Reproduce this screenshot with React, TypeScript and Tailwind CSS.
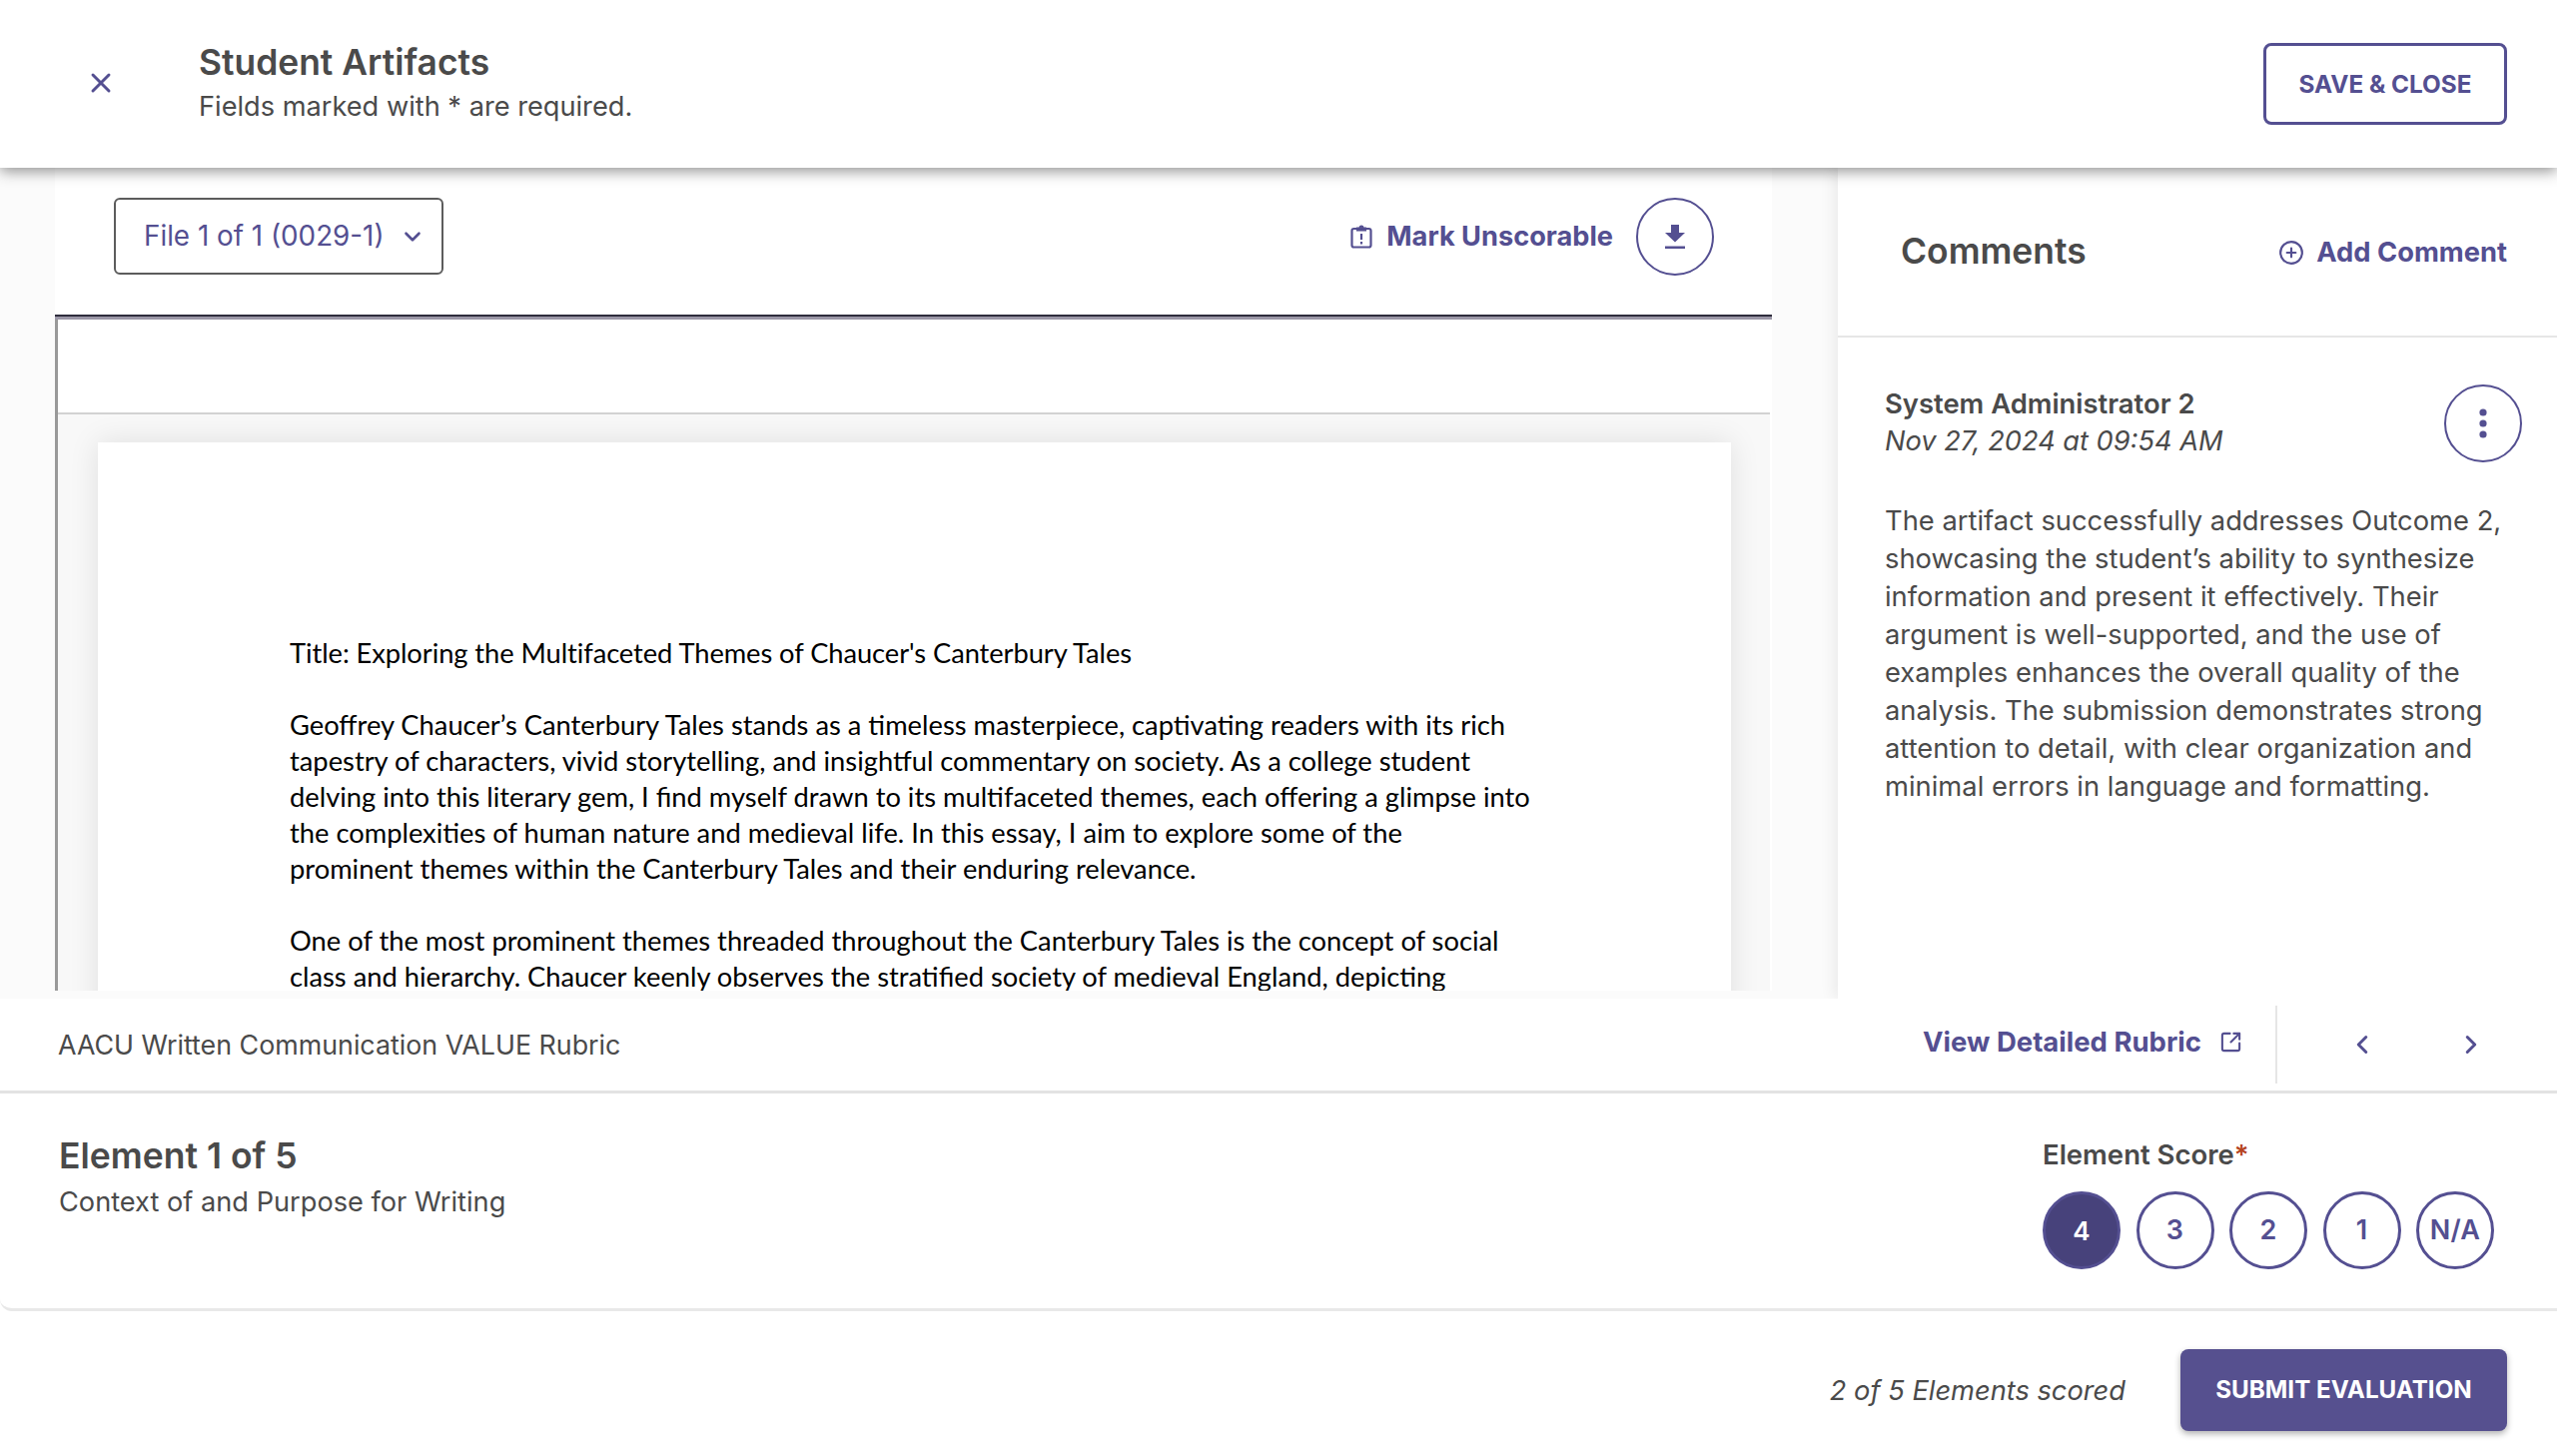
import React from "react";
import { X, ChevronDown, ChevronLeft, ChevronRight, CirclePlus, SquareArrowOutUpRight } from "lucide-react";

const docParas = [
  ["Title: Exploring the Multifaceted Themes of Chaucer's Canterbury Tales"],
  [
    "Geoffrey Chaucer’s Canterbury Tales stands as a timeless masterpiece, captivating readers with its rich",
    "tapestry of characters, vivid storytelling, and insightful commentary on society. As a college student",
    "delving into this literary gem, I find myself drawn to its multifaceted themes, each offering a glimpse into",
    "the complexities of human nature and medieval life. In this essay, I aim to explore some of the",
    "prominent themes within the Canterbury Tales and their enduring relevance.",
  ],
  [
    "One of the most prominent themes threaded throughout the Canterbury Tales is the concept of social",
    "class and hierarchy. Chaucer keenly observes the stratified society of medieval England, depicting",
  ],
];

const commentLines = [
  "The artifact successfully addresses Outcome 2,",
  "showcasing the student’s ability to synthesize",
  "information and present it effectively. Their",
  "argument is well-supported, and the use of",
  "examples enhances the overall quality of the",
  "analysis. The submission demonstrates strong",
  "attention to detail, with clear organization and",
  "minimal errors in language and formatting.",
];

function ClipboardAlert() {
  return (
    <svg width="22" height="24" viewBox="0 0 22 24" fill="none" stroke="#544f91" strokeWidth="2.2">
      <rect x="1.5" y="4" width="19" height="18.5" rx="2" />
      <path d="M7 5.500V3.500h2.500c0-2.500 3-2.500 3 0H15v2z" />
      <path d="M11 9v6M11 17v2.500" />
    </svg>
  );
}

function DownloadGlyph() {
  return (
    <svg width="22" height="26" viewBox="0 0 22 26" fill="#544f91">
      <path d="M7 1h8v8h6L11 18.500 1 9h6z" />
      <rect x="1" y="22.500" width="20" height="2.500" />
    </svg>
  );
}

function Dots() {
  return (
    <svg width="10" height="32" viewBox="0 0 10 32" fill="#544f91">
      <circle cx="5" cy="5" r="3.600" />
      <circle cx="5" cy="16" r="3.600" />
      <circle cx="5" cy="27" r="3.600" />
    </svg>
  );
}

function Score({ label, active }: { label: string; active?: boolean }) {
  return (
    <div
      className={
        active
          ? "flex h-[78px] w-[78px] items-center justify-center rounded-full border-[3px] border-[#544f91] bg-[#47427b] text-[26px] font-semibold text-white"
          : "flex h-[78px] w-[78px] items-center justify-center rounded-full border-[3px] border-[#544f91] bg-white text-[27px] font-semibold tracking-[0.2px] text-[#544f91]"
      }
    >
      {label}
    </div>
  );
}

export default function App() {
  return (
    <div className="flex h-[1458px] w-[2560px] flex-col overflow-hidden bg-white font-['Inter',sans-serif] text-[#4a4a4a]">
      {/* Top bar */}
      <header className="relative z-20 flex h-[168px] shrink-0 items-center bg-white pr-[50px] shadow-[0_3px_14px_rgba(0,0,0,0.45)]">
        <div className="flex w-[199px] justify-center pb-[2px] pl-[3px]">
          <X size={32} color="#544f91" strokeWidth={2.200} />
        </div>
        <div className="flex flex-1 flex-col pb-[4px]">
          <div className="text-[35.400px] leading-[48px] font-semibold">Student Artifacts</div>
          <div className="text-[27.200px] leading-[39px]">Fields marked with * are required.</div>
        </div>
        <button className="flex h-[82px] w-[244px] items-center justify-center rounded-[8px] border-[3.500px] border-[#544f91] text-[24.300px] font-bold text-[#544f91]">
          SAVE &amp; CLOSE
        </button>
      </header>

      {/* Work area */}
      <main className="flex h-[832px] shrink-0 bg-[#fbfbfb]">
        <section className="ml-[55px] flex h-[824px] w-[1719px] flex-col bg-white">
          <div className="flex h-[147px] shrink-0 items-start justify-between pt-[30px] pr-[58px] pl-[59px]">
            <button className="flex h-[77px] w-[330px] items-center gap-[15px] rounded-[6px] border-2 border-[#5c5c5c] pt-[1px] pl-[28px] text-[27.800px] text-[#544f91]">
              File 1 of 1 (0029-1)
              <ChevronDown size={26} color="#544f91" strokeWidth={2.400} />
            </button>
            <div className="flex items-center">
              <ClipboardAlert />
              <span className="ml-[14px] text-[27.200px] font-bold text-[#544f91]">Mark Unscorable</span>
              <div className="ml-[23px] flex h-[78px] w-[78px] items-center justify-center rounded-full border-2 border-[#544f91]">
                <DownloadGlyph />
              </div>
            </div>
          </div>
          <div className="flex min-h-0 flex-1 flex-col border-t-2 border-t-[#2e2c3c]">
            <div className="h-[3px] shrink-0 bg-[#9a96a6]" />
            <div className="mr-[2px] flex min-h-0 flex-1 flex-col border-l-[3px] border-l-[#999999]">
              <div className="h-[95px] shrink-0 border-b-2 border-[#d2d2d2] bg-white" />
              <div className="min-h-0 flex-1 overflow-hidden bg-[#f8f8f8] pt-[28px] pl-[40px]">
                <div className="h-[600px] w-[1635px] bg-white pt-[193px] pl-[192px] font-['Lato',sans-serif] text-[27.300px] leading-[36px] text-black shadow-[0_0_28px_rgba(0,0,0,0.1)]">
                  {docParas.map((p, i) => (
                    <p key={i} className="mb-[36px] whitespace-nowrap first:tracking-[-0.07px]">
                      {p.map((l) => (
                        <span key={l} className="block">
                          {l}
                        </span>
                      ))}
                    </p>
                  ))}
                </div>
              </div>
            </div>
          </div>
        </section>

        <aside className="ml-[66px] flex w-[720px] flex-col bg-white shadow-[-4px_0_14px_rgba(0,0,0,0.07)]">
          <div className="flex h-[170px] shrink-0 items-start justify-between border-b-2 border-[#e6e6e6] pt-[62px] pr-[50px] pl-[63px]">
            <div className="text-[35.400px] leading-[44px] font-semibold">Comments</div>
            <div className="flex items-center gap-[12px] pt-[1px] text-[27.300px] leading-[44px] font-bold text-[#544f91]">
              <CirclePlus size={26} color="#544f91" strokeWidth={2} />
              Add Comment
            </div>
          </div>
          <div className="pt-[47px] pr-[35px] pl-[47px]">
            <div className="flex items-start justify-between">
              <div>
                <div className="text-[27.400px] leading-[38px] font-semibold">System Administrator 2</div>
                <div className="text-[27.200px] leading-[38px] italic">Nov 27, 2024 at 09:54 AM</div>
              </div>
              <div className="flex h-[78px] w-[78px] items-center justify-center rounded-full border-2 border-[#544f91]">
                <Dots />
              </div>
            </div>
            <div className="mt-[40px] text-[27.350px] leading-[38px]">
              {commentLines.map((l) => (
                <div key={l} className="whitespace-nowrap">
                  {l}
                </div>
              ))}
            </div>
          </div>
        </aside>
      </main>

      {/* Rubric */}
      <div className="relative z-10 flex h-[95px] shrink-0 items-center justify-between rounded-tl-[12px] border-b-[3px] border-[#e3e3e3] bg-white">
        <div className="pl-[58px] text-[26.800px]">AACU Written Communication VALUE Rubric</div>
        <div className="flex h-full items-center">
          <div className="flex items-center gap-[18px] pb-[5px] text-[27.500px] font-bold text-[#544f91]">
            View Detailed Rubric
            <SquareArrowOutUpRight size={23} color="#544f91" strokeWidth={2.200} />
          </div>
          <div className="ml-[33px] flex h-[78px] w-[282px] items-center border-l-2 border-[#e6e6e6] pl-[70px]">
            <ChevronLeft size={30} color="#544f91" strokeWidth={2.400} />
            <ChevronRight size={30} color="#544f91" strokeWidth={2.400} className="ml-[79px]" />
          </div>
        </div>
      </div>

      {/* Element */}
      <div className="flex h-[218px] shrink-0 justify-between rounded-bl-[12px] border-b-[3px] border-[#e8e8e8] bg-white pr-[50px] pl-[59px]">
        <div className="pt-[39px]">
          <div className="text-[35.500px] leading-[48px] font-semibold">Element 1 of 5</div>
          <div className="text-[27.200px] leading-[44px]">Context of and Purpose for Writing</div>
        </div>
        <div className="w-[465px] pt-[42px]">
          <div className="text-[27.500px] leading-[38px] font-semibold">
            Element Score<span className="text-[#b5431f]">*</span>
          </div>
          <div className="mt-[18px] flex gap-[15.500px]">
            <Score label="4" active />
            <Score label="3" />
            <Score label="2" />
            <Score label="1" />
            <Score label="N/A" />
          </div>
        </div>
      </div>

      {/* Footer */}
      <footer className="flex flex-1 items-start justify-end gap-[55px] bg-white pt-[38px] pr-[50px]">
        <div className="pt-[23px] text-[27.250px] leading-[38px] italic">2 of 5 Elements scored</div>
        <button className="h-[82px] w-[327px] rounded-[8px] bg-[#56508f] pt-[1px] text-[24.200px] font-bold text-white shadow-[0_3px_6px_rgba(0,0,0,0.3)]">
          SUBMIT EVALUATION
        </button>
      </footer>
    </div>
  );
}
